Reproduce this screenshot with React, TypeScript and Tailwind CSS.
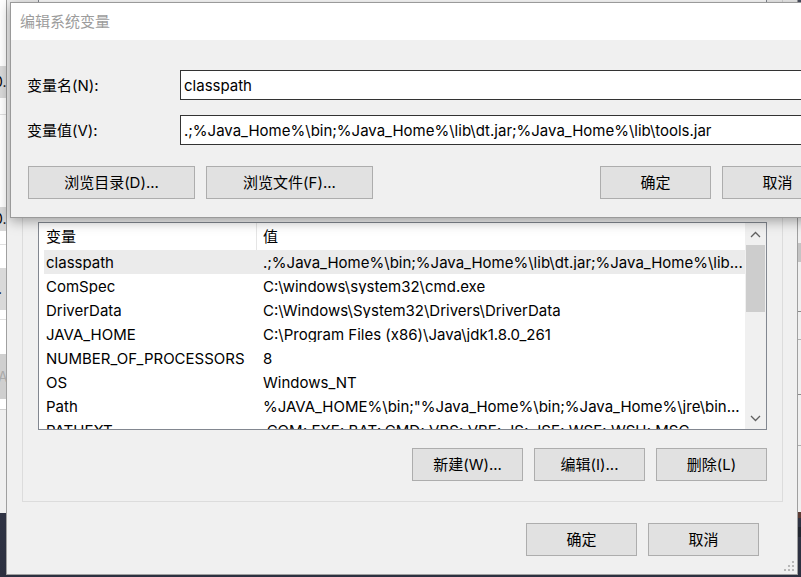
import React from "react";

const rows: [string, string][] = [
  ["classpath", String.raw`.;%Java_Home%\bin;%Java_Home%\lib\dt.jar;%Java_Home%\lib...`],
  ["ComSpec", String.raw`C:\windows\system32\cmd.exe`],
  ["DriverData", String.raw`C:\Windows\System32\Drivers\DriverData`],
  ["JAVA_HOME", String.raw`C:\Program Files (x86)\Java\jdk1.8.0_261`],
  ["NUMBER_OF_PROCESSORS", "8"],
  ["OS", "Windows_NT"],
  ["Path", String.raw`%JAVA_HOME%\bin;"%Java_Home%\bin;%Java_Home%\jre\bin...`],
  ["PATHEXT", ".COM;.EXE;.BAT;.CMD;.VBS;.VBE;.JS;.JSE;.WSF;.WSH;.MSC"],
];

function Btn({ label, w, cls = "" }: { label: string; w: string; cls?: string }) {
  return (
    <div
      className={`${w} h-[33px] shrink-0 flex items-center justify-center bg-[#e1e1e1] border border-[#adadad] text-black ${cls}`}
    >
      {label}
    </div>
  );
}

function Chevron({ up }: { up: boolean }) {
  return (
    <svg width="11" height="7" viewBox="0 0 11 7">
      <polyline
        points={up ? "1,6 5.5,1.5 10,6" : "1,1 5.5,5.5 10,1"}
        fill="none"
        stroke="#606060"
        strokeWidth="1.3"
      />
    </svg>
  );
}

export default function App() {
  const bs = String.raw`.;%Java_Home%\bin;%Java_Home%\lib\dt.jar;%Java_Home%\lib\tools.jar`;
  return (
    <div className="relative w-[801px] h-[577px] overflow-hidden bg-gradient-to-b from-[#4a5064] to-[#2c3040] font-['Inter','Noto_Sans_CJK_SC',sans-serif] text-[15px] leading-none text-black">
      {/* third window behind, left */}
      <div className="absolute left-0 top-0 w-[8px] h-[513px] bg-[#f0f0f0] flex flex-col text-[14px]">
        <div className="h-[66px] bg-white" />
        <div className="h-[32px] bg-[#d9d9d9] flex items-center -ml-[6px]">0.</div>
        <div className="h-[17px] bg-white border-b border-[#e0e0e0]" />
        <div className="h-[92px] bg-white" />
        <div className="h-[24px] bg-[#d9d9d9] flex items-center -ml-[6px]">0.</div>
        <div className="h-[14px] bg-white border-b border-[#e0e0e0]" />
        <div className="h-[23px] bg-white" />
        <div className="h-[42px] bg-[#d9d9d9] flex items-center -ml-[6px]">..</div>
        <div className="h-[10px] bg-white border-b border-[#e0e0e0]" />
        <div className="h-[34px] bg-white" />
        <div className="h-[45px] bg-[#cfcfcf] flex items-center text-[#aaaaaa] -ml-[2px]">A</div>
        <div className="h-[11px] bg-white border-b border-[#d0d0d0]" />
        <div className="flex-1 bg-[#f0f0f0]" />
      </div>

      {/* window behind, right */}
      <div className="absolute left-[790px] top-[200px] w-[20px] h-[312px] bg-[#f0f0f0] flex flex-col">
        <div className="h-[43px]" />
        <div className="h-[19px] bg-[#c4c4c4]" />
        <div className="h-[50px] border-b border-[#8a8a8a]" />
        <div className="h-[28px] border-b border-[#b0b0b0]" />
        <div className="h-[55px] border-b border-[#8a8a8a]" />
        <div className="h-[51px] border-b border-[#b0b0b0]" />
        <div className="flex-1" />
      </div>
      <div className="absolute left-[790px] top-[512px] w-[20px] h-[6px] bg-[#5b3b34]" />
      <div className="absolute left-[790px] top-[527px] w-[20px] h-[10px] bg-[#222630]" />

      {/* main window: 环境变量 */}
      <div className="absolute left-[6px] top-[-10px] w-[792px] h-[585px] bg-[#f0f0f0] border border-[#a0a0a0] flex flex-col">
        {/* remnant of upper list */}
        <div className="h-[12px] ml-[31px] w-[746px] flex">
          <div className="w-[729px] bg-white border-x border-b border-[#828790]" />
          <div className="w-[16px] border-r border-[#d6d6d6]" />
        </div>

        {/* group box */}
        <div className="mt-[197px] ml-[15px] w-[761px] border border-[#dcdcdc] pt-[21px] px-[15px] pb-[20px] flex flex-col">
          {/* list view */}
          <div className="h-[208px] border border-[#828790] bg-white flex overflow-hidden">
            <div className="flex-1 flex flex-col overflow-hidden">
              {/* header */}
              <div className="h-[27px] shrink-0 flex">
                <div className="w-[218px] border-r border-[#e5e5e5] flex items-center pl-[7px]">变量</div>
                <div className="flex items-center pl-[6px]">值</div>
              </div>
              {rows.map(([k, v], i) => (
                <div
                  key={k}
                  className={`h-[24px] shrink-0 ml-[5px] flex items-center whitespace-nowrap ${i === 0 ? "bg-[#ebebeb]" : ""}`}
                >
                  <div className="w-[213px] pl-[2px] overflow-hidden">{k}</div>
                  <div className="flex-1 pl-[6px] overflow-hidden">{v}</div>
                </div>
              ))}
            </div>
            {/* scrollbar */}
            <div className="w-[21px] shrink-0 bg-[#f0f0f0] flex flex-col">
              <div className="h-[22px] flex items-center justify-center">
                <Chevron up />
              </div>
              <div className="h-[67px] mx-[1px] bg-[#cdcdcd]" />
              <div className="flex-1" />
              <div className="h-[22px] flex items-center justify-center">
                <Chevron up={false} />
              </div>
            </div>
          </div>
          {/* buttons */}
          <div className="mt-[18px] flex justify-end gap-[11px]">
            <Btn label="新建(W)..." w="w-[111px]" />
            <Btn label="编辑(I)..." w="w-[111px]" />
            <Btn label="删除(L)" w="w-[111px]" />
          </div>
        </div>

        {/* bottom buttons */}
        <div className="mt-[21px] pr-[38px] flex justify-end gap-[11px]">
          <Btn label="确定" w="w-[111px]" />
          <Btn label="取消" w="w-[111px]" />
        </div>

        {/* resize grip */}
        <svg className="absolute right-[2px] bottom-[2px]" width="12" height="12" viewBox="0 0 12 12">
          <rect x="9" y="1" width="2" height="2" fill="#b8b8b8" />
          <rect x="5" y="5" width="2" height="2" fill="#b8b8b8" />
          <rect x="9" y="5" width="2" height="2" fill="#b8b8b8" />
          <rect x="1" y="9" width="2" height="2" fill="#b8b8b8" />
          <rect x="5" y="9" width="2" height="2" fill="#b8b8b8" />
          <rect x="9" y="9" width="2" height="2" fill="#b8b8b8" />
        </svg>
      </div>

      {/* edit dialog */}
      <div className="absolute left-[10px] top-[2px] w-[840px] border border-[#9a9a9a] bg-[#f0f0f0] shadow-[0_3px_12px_rgba(0,0,0,0.35)] flex flex-col">
        <div className="h-[37px] bg-white flex items-center pl-[9px] text-[#9c9c9c]">编辑系统变量</div>
        <div className="px-[16px] pt-[30px] pb-[18px] flex flex-col">
          <div className="flex items-center">
            <div className="w-[153px]">变量名(N):</div>
            <div className="flex-1 h-[30px] bg-white border border-[#333333] flex items-center pl-[3px]">classpath</div>
          </div>
          <div className="mt-[15px] flex items-center">
            <div className="w-[153px]">变量值(V):</div>
            <div className="flex-1 h-[30px] bg-white border border-[#333333] flex items-center pl-[3px] whitespace-nowrap overflow-hidden">
              {bs}
            </div>
          </div>
          <div className="mt-[21px] flex">
            <Btn label="浏览目录(D)..." w="w-[167px]" cls="ml-[1px]" />
            <Btn label="浏览文件(F)..." w="w-[167px]" cls="ml-[11px]" />
            <div className="flex-1" />
            <Btn label="确定" w="w-[111px]" />
            <Btn label="取消" w="w-[111px]" cls="ml-[11px]" />
          </div>
        </div>
      </div>
    </div>
  );
}
